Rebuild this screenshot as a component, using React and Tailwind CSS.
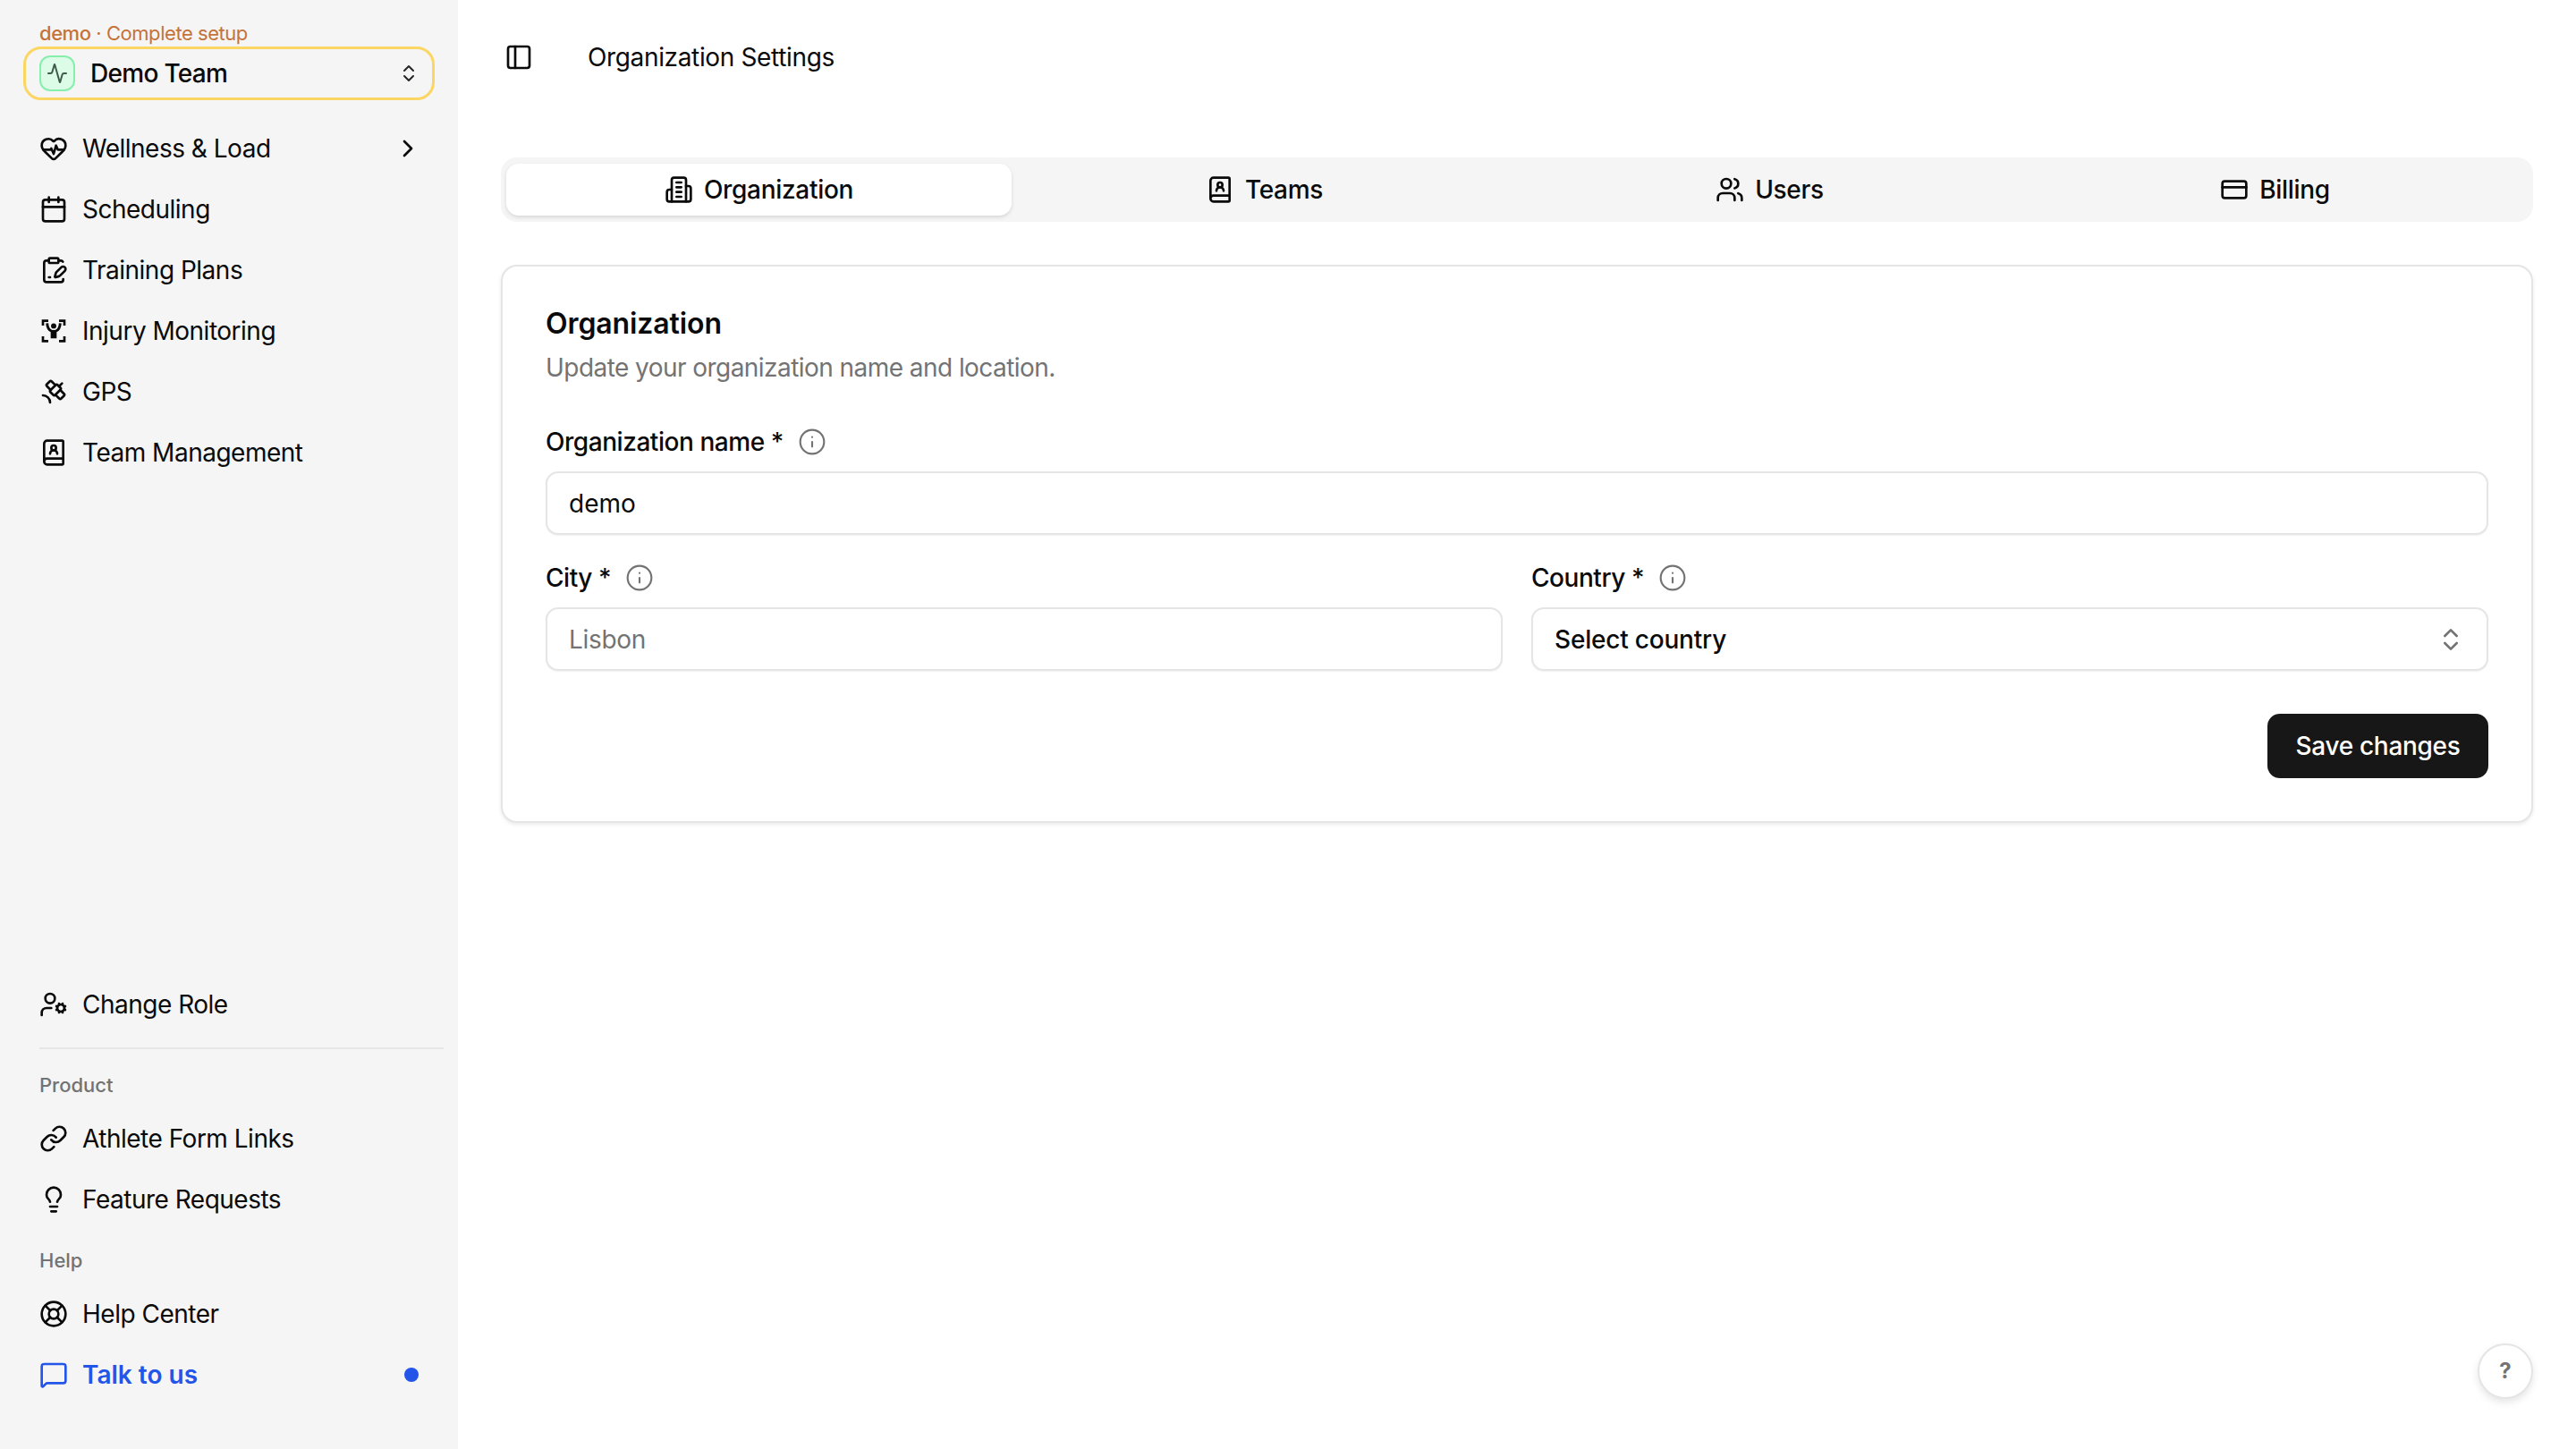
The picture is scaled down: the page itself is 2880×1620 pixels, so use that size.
import {
  Activity,
  BookUser,
  Calendar,
  ChevronRight,
  ChevronsUpDown,
  ClipboardPenLine,
  CreditCard,
  HeartPulse,
  Info,
  LifeBuoy,
  Lightbulb,
  Link,
  MessageSquare,
  PanelLeft,
  Satellite,
  UserCog,
  Users,
} from "lucide-react";

function InjuryIcon({ className }) {
  return (
    <svg viewBox="0 0 24 24" fill="none" stroke="currentColor" strokeWidth="2" className={className}>
      <path d="M3 7.5V3.5h4.5M16.5 3.5H21v4M21 16.5v4h-4.5M7.5 20.5H3v-4" />
      <circle cx="12" cy="7.8" r="2.2" fill="currentColor" stroke="none" />
      <path d="M6.5 5.5c.2 3 1.2 5.5 3.5 6.5M17.5 5.5c-.2 3-1.2 5.5-3.5 6.5" strokeWidth="2.2" />
      <rect x="9.5" y="11.2" width="5" height="7" fill="currentColor" stroke="none" />
    </svg>
  );
}

function BuildingIcon({ className }) {
  return (
    <svg viewBox="0 0 24 24" fill="none" stroke="currentColor" strokeWidth="2" strokeLinecap="round" strokeLinejoin="round" className={className}>
      <path d="M6 22V4a2 2 0 0 1 2-2h8a2 2 0 0 1 2 2v18Z" />
      <path d="M6 12H4a2 2 0 0 0-2 2v6a2 2 0 0 0 2 2h2" />
      <path d="M18 9h2a2 2 0 0 1 2 2v9a2 2 0 0 1-2 2h-2" />
      <path d="M10 6h4M10 10h4M10 14h4M10 18h4" />
    </svg>
  );
}

function NavItem({ icon: Icon, label, right }) {
  return (
    <div className="flex h-[68px] items-center pl-[44px] pr-[40px] text-[28px] tracking-[-0.5px] text-[#0a0a0a]">
      <Icon className="mr-[16px] h-[32px] w-[32px] shrink-0" />
      <span>{label}</span>
      {right}
    </div>
  );
}

function SectionLabel({ children }) {
  return <div className="flex h-[44px] items-center pl-[44px] text-[22px] font-medium text-[#737373]">{children}</div>;
}

function Tab({ icon: Icon, label, active }) {
  return (
    <div
      className={
        active
          ? "flex flex-1 items-center justify-center gap-[12px] rounded-[14px] bg-white text-[28px] font-medium tracking-[-0.3px] text-[#0a0a0a] shadow-[0_2px_4px_rgba(0,0,0,0.12)]"
          : "flex flex-1 items-center justify-center gap-[12px] text-[28px] font-medium tracking-[-0.3px] text-[#0a0a0a]"
      }
    >
      <Icon className="h-[32px] w-[32px]" />
      <span>{label}</span>
    </div>
  );
}

function FieldLabel({ children }) {
  return (
    <div className="flex h-[32px] items-center gap-[16px] text-[28px] font-medium tracking-[-0.45px] text-[#0a0a0a]">
      <span>{children}</span>
      <Info className="h-[32px] w-[32px] text-[#737373]" strokeWidth={1.6} />
    </div>
  );
}

export default function App() {
  return (
    <div className="flex h-[1620px] w-[2880px] overflow-hidden bg-white font-['Inter',sans-serif]">
      {/* Sidebar */}
      <aside className="flex w-[512px] shrink-0 flex-col justify-between bg-[#f5f5f5] pt-[23px] pb-[49px]">
        <div>
          <div className="pl-[44px] text-[22px] leading-[29px] tracking-[-0.45px] text-[#c4733a]">
            <span className="font-medium">demo</span> · Complete setup
          </div>
          <div className="mx-[26px] flex h-[60px] items-center rounded-[20px] border-[3px] border-[#fcd662] pl-[15px] pr-[14px]">
            <div className="mr-[17px] flex h-[40px] w-[40px] items-center justify-center rounded-[12px] border-2 border-[#86efac] bg-[#dcfce7]">
              <Activity className="h-[24px] w-[24px] text-[#3f5a4a]" />
            </div>
            <span className="text-[28px] font-medium tracking-[-0.7px] text-[#0a0a0a]">Demo Team</span>
            <ChevronsUpDown className="ml-auto h-[24px] w-[24px] text-[#262626]" />
          </div>
          <div className="mt-[20px]">
            <NavItem icon={HeartPulse} label="Wellness & Load" right={<ChevronRight className="ml-auto h-[32px] w-[32px]" />} />
            <NavItem icon={Calendar} label="Scheduling" />
            <NavItem icon={ClipboardPenLine} label="Training Plans" />
            <NavItem icon={InjuryIcon} label="Injury Monitoring" />
            <NavItem icon={Satellite} label="GPS" />
            <NavItem icon={BookUser} label="Team Management" />
          </div>
        </div>
        <div>
          <NavItem icon={UserCog} label="Change Role" />
          <div className="mt-[14px] mb-[18px] ml-[44px] mr-[16px] h-[2px] bg-[#e5e5e5]" />
          <SectionLabel>Product</SectionLabel>
          <div className="mt-[4px]">
            <NavItem icon={Link} label="Athlete Form Links" />
            <NavItem icon={Lightbulb} label="Feature Requests" />
          </div>
          <div className="mt-[12px]">
            <SectionLabel>Help</SectionLabel>
          </div>
          <div className="mt-[4px]">
            <NavItem icon={LifeBuoy} label="Help Center" />
            <div className="flex h-[68px] items-center pl-[44px] pr-[44px] text-[28px] font-semibold text-[#2255e8]">
              <MessageSquare className="mr-[16px] h-[32px] w-[32px]" />
              <span>Talk to us</span>
              <span className="ml-auto h-[16px] w-[16px] rounded-full bg-[#2255e8]" />
            </div>
          </div>
        </div>
      </aside>

      {/* Main */}
      <main className="relative flex-1 px-[48px]">
        <header className="flex h-[128px] items-center pl-[4px] text-[28px] tracking-[-0.35px] text-[#0a0a0a]">
          <PanelLeft className="mr-[61px] h-[32px] w-[32px]" />
          <span>Organization Settings</span>
        </header>

        <div className="mt-[48px] flex h-[72px] rounded-[18px] bg-[#f5f5f5] px-[6px] py-[7px]">
          <Tab icon={BuildingIcon} label="Organization" active />
          <Tab icon={BookUser} label="Teams" />
          <Tab icon={Users} label="Users" />
          <Tab icon={CreditCard} label="Billing" />
        </div>

        <section className="mt-[48px] h-[624px] rounded-[18px] border-2 border-[#e5e5e5] bg-white px-[48px] pt-[45px] shadow-[0_2px_4px_rgba(0,0,0,0.08)]">
          <h2 className="text-[32px] font-semibold leading-[38px] tracking-[-0.1px] text-[#0a0a0a]">Organization</h2>
          <p className="mt-[10px] text-[28px] leading-[40px] tracking-[-0.55px] text-[#737373]">Update your organization name and location.</p>

          <div className="mt-[47px]">
            <FieldLabel>Organization name *</FieldLabel>
            <input
              readOnly
              value="demo"
              className="mt-[17px] h-[71px] w-full rounded-[14px] border-2 border-[#e5e5e5] bg-white px-[24px] text-[28px] text-[#0a0a0a] shadow-[0_1px_2px_rgba(0,0,0,0.06)] outline-none"
            />
          </div>

          <div className="mt-[32px] grid grid-cols-2 gap-[32px]">
            <div>
              <FieldLabel>City *</FieldLabel>
              <input
                readOnly
                placeholder="Lisbon"
                className="mt-[17px] h-[71px] w-full rounded-[14px] border-2 border-[#e5e5e5] bg-white px-[24px] text-[28px] tracking-[-0.3px] shadow-[0_1px_2px_rgba(0,0,0,0.06)] outline-none placeholder:text-[#737373]"
              />
            </div>
            <div>
              <FieldLabel>Country *</FieldLabel>
              <div className="mt-[17px] flex h-[71px] items-center justify-between rounded-[14px] border-2 border-[#e5e5e5] bg-white px-[24px] text-[28px] font-medium tracking-[-0.2px] text-[#0a0a0a] shadow-[0_1px_2px_rgba(0,0,0,0.06)]">
                <span>Select country</span>
                <ChevronsUpDown className="h-[32px] w-[32px] text-[#737373]" />
              </div>
            </div>
          </div>

          <div className="mt-[48px] flex justify-end">
            <button className="h-[72px] w-[247px] rounded-[14px] bg-[#171717] text-[28px] font-medium tracking-[-0.3px] text-white">Save changes</button>
          </div>
        </section>

        <button className="absolute right-[48px] bottom-[56px] flex h-[62px] w-[62px] items-center justify-center rounded-full border-2 border-[#e5e5e5] bg-white text-[24px] font-bold text-[#737373] shadow-[0_4px_8px_rgba(0,0,0,0.1)]">
          ?
        </button>
      </main>
    </div>
  );
}
